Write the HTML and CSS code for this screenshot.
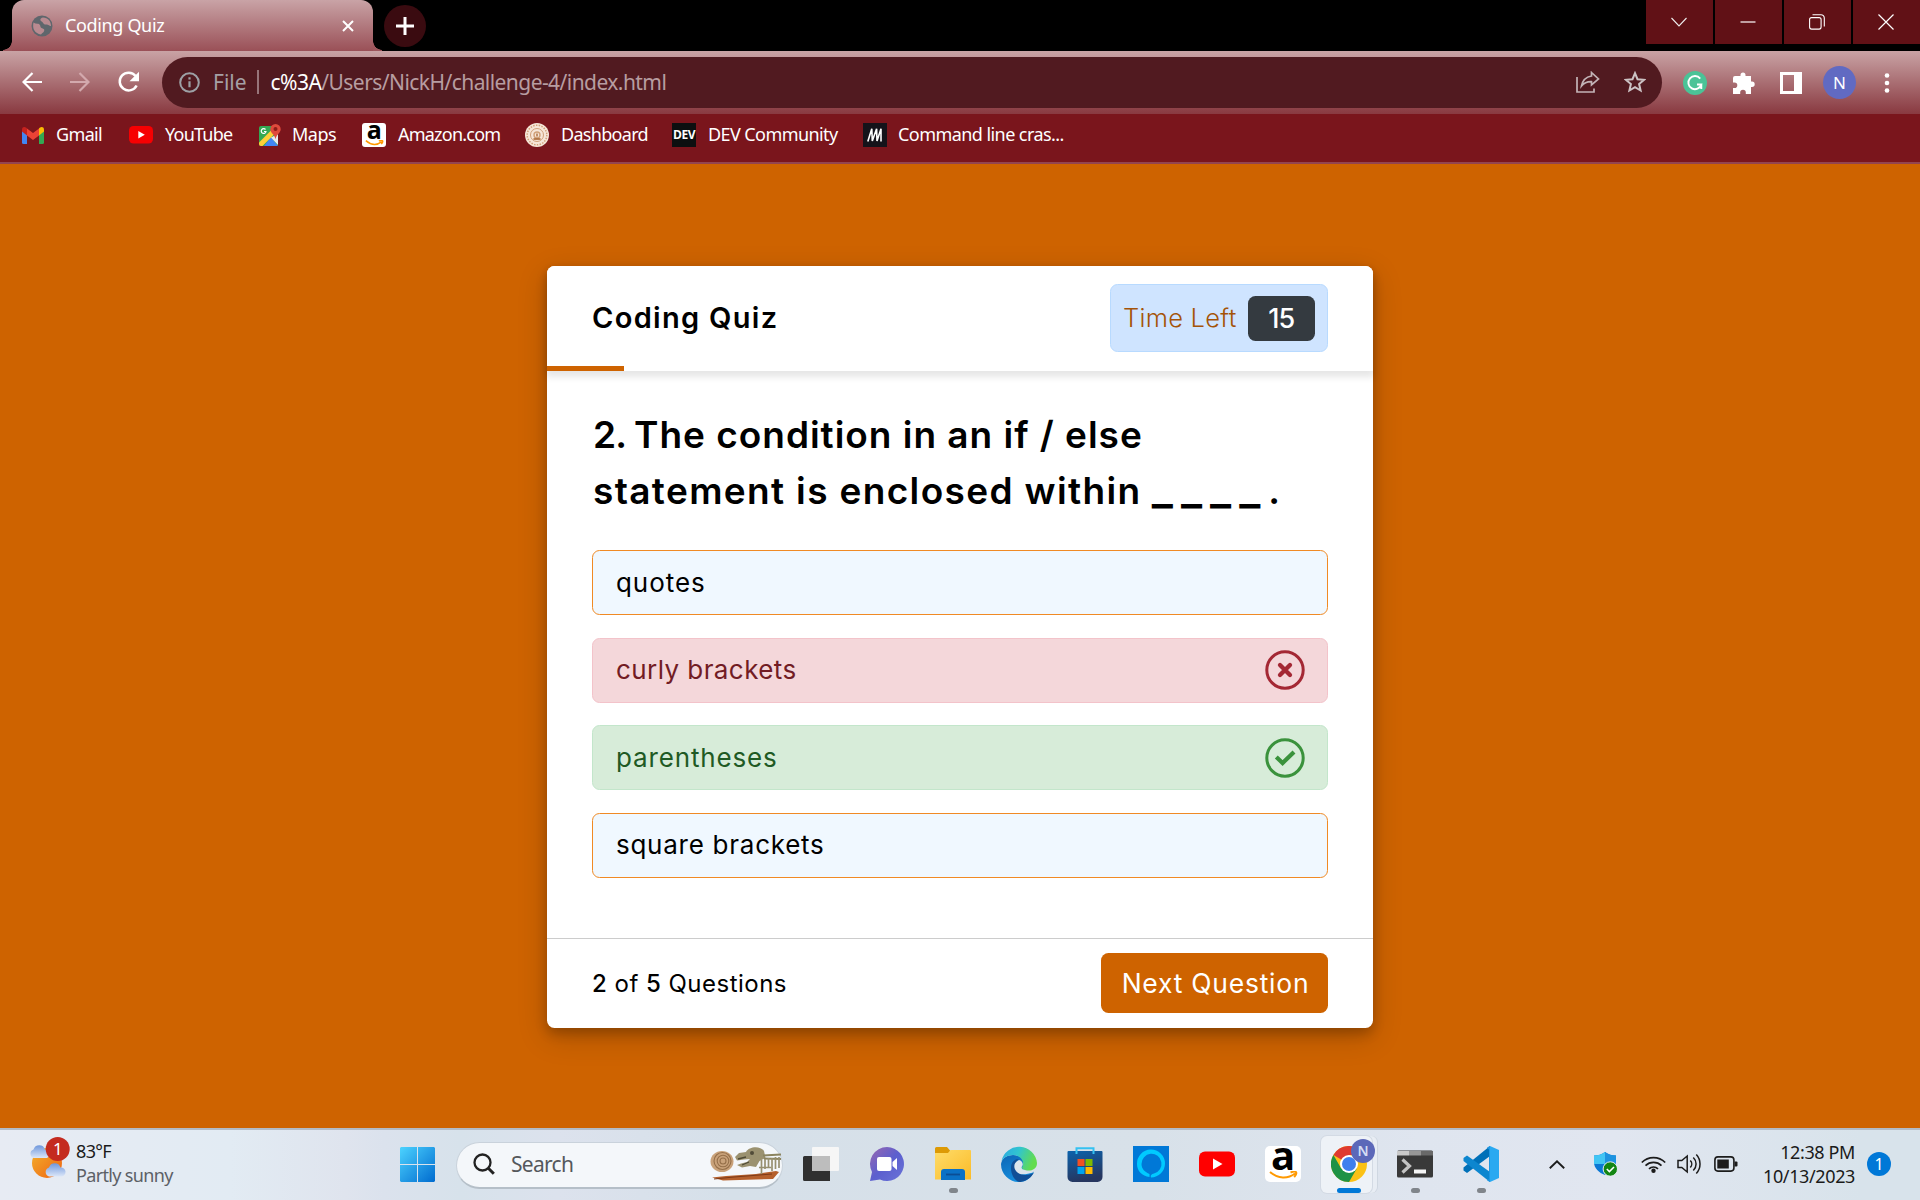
FILE: index.html
```html
<!DOCTYPE html>
<html lang="en">
<head>
<meta charset="utf-8">
<title>Coding Quiz</title>
<link rel="stylesheet" href="styles.css">
</head>
<body>
<header class="browser">
  <div class="tabstrip">
    <div class="tab">
      <svg class="globe" width="22" height="22" viewBox="0 0 22 22"><circle cx="11" cy="11" r="10.500" fill="#5f666c"/><path d="M2.500 7.500c2.500 2 4.500.5 6 2s.3 2.800 2 3.500 3.200.8 2.700 2.800S11 18 10 19.500C4 18.500 1 14 2.500 7.500zM12 2.500c-3 .5-3.300 3-1.300 4s1.300 3 4.300 3 3 1.500 5 1.500C20 6 17 3 12 2.500z" fill="#b98a90"/></svg>
      <span class="tab-title">Coding Quiz</span>
      <svg class="tab-close" width="12" height="12" viewBox="0 0 12 12"><path d="M1 1l10 10M11 1L1 11" stroke="#fff" stroke-width="2"/></svg>
    </div>
    <div class="newtab"><svg width="18" height="18" viewBox="0 0 18 18"><path d="M9 0v18M0 9h18" stroke="#fff" stroke-width="3"/></svg></div>
    <div class="window-controls">
      <div class="wc"><svg width="16" height="16" viewBox="0 0 16 16"><path d="M.5 4L8 12l7.500-8" fill="none" stroke="#eee" stroke-width="1.100"/></svg></div>
      <div class="wc"><svg width="16" height="16" viewBox="0 0 16 16"><path d="M.5 8h15" stroke="#fff" stroke-width="1.200"/></svg></div>
      <div class="wc"><svg width="16" height="16" viewBox="0 0 16 16"><g fill="none" stroke="#fff" stroke-width="1.100"><rect x=".6" y="3.600" width="11.500" height="11.500" rx="2"/><path d="M3.500 .7H12a3.300 3.300 0 0 1 3.300 3.300v8.500"/></g></svg></div>
      <div class="wc"><svg width="16" height="16" viewBox="0 0 16 16"><path d="M.5 .5l15 15M15.500 .5l-15 15" stroke="#fff" stroke-width="1.200"/></svg></div>
    </div>
  </div>

  <div class="toolbar">
    <div class="nav">
      <svg width="20" height="20" viewBox="0 0 20 20"><path d="M20 10H2M10.500 1L1.500 10l9 9" fill="none" stroke="#fff" stroke-width="2.200"/></svg>
      <svg width="20" height="20" viewBox="0 0 20 20"><path d="M0 10h18M9.500 1l9 9-9 9" fill="none" stroke="#d3a9ad" stroke-width="2.200"/></svg>
      <svg width="22" height="22" viewBox="0 0 22 22"><path d="M18.600 14.500A8.900 8.900 0 1 1 17.600 5" fill="none" stroke="#fff" stroke-width="2.500"/><path d="M21 .8v9.400h-9.500z" fill="#fff"/></svg>
    </div>
    <div class="omnibox">
      <svg class="info" width="21" height="21" viewBox="0 0 21 21"><circle cx="10.500" cy="10.500" r="9.300" fill="none" stroke="#9da0a5" stroke-width="2"/><path d="M10.500 9.300v6M10.500 5.300v2.200" stroke="#9da0a5" stroke-width="2.200"/></svg>
      <span class="scheme">File</span>
      <span class="divider"></span>
      <span class="url"><b>c%3A</b>/Users/NickH/challenge-4/index.html</span>
      <svg class="share" width="24" height="22" viewBox="0 0 24 22"><g fill="none" stroke="#c3b4b7" stroke-width="1.700"><path d="M1 6v15h17v-3.500"/><path d="M15.500 1.500L22.500 8l-7 6v-3.300C11 10.500 8 12 5.500 15 6.500 9.500 9.500 6 15.500 5z"/></g></svg>
      <svg class="star" width="22" height="22" viewBox="0 0 22 22"><path d="M11 2.200l2.500 6 6.600.6-5 4.300 1.500 6.400L11 16.100l-5.600 3.400 1.500-6.400-5-4.300 6.600-.6z" fill="none" stroke="#ccc2c4" stroke-width="2"/></svg>
    </div>
    <div class="extensions">
      <svg width="24" height="24" viewBox="0 0 24 24"><circle cx="12" cy="12" r="12" fill="#4bc397"/><path d="M17.200 7.600A6.600 6.600 0 1 0 18.300 13.500h-4.300M18.300 13v5" fill="none" stroke="#fff" stroke-width="1.900"/></svg>
      <svg width="22" height="22" viewBox="0 0 22 22"><path d="M2 4h5.500V3a2.500 2.500 0 0 1 5 0v1H18v5.500h1a2.700 2.700 0 0 1 0 5.400h-1V22h-5.200v-1.500a2.800 2.800 0 0 0-5.600 0V22H0v-6h1.500a2.800 2.800 0 0 0 0-5.600H0V6a2 2 0 0 1 2-2z" fill="#fff"/></svg>
      <svg width="22" height="22" viewBox="0 0 22 22"><path fill="#fff" fill-rule="evenodd" d="M0 0h22v22H0zM3 3v16h11V3z"/></svg>
      <span class="profile">N</span>
      <svg width="6" height="20" viewBox="0 0 6 20"><g fill="#fff"><circle cx="3" cy="2.500" r="2.300"/><circle cx="3" cy="10" r="2.300"/><circle cx="3" cy="17.500" r="2.300"/></g></svg>
    </div>
  </div>

  <nav class="bookmarks">
    <a class="bm bm-gmail"><svg width="22" height="17" viewBox="0 0 22 17"><path d="M0 3v12.500A1.500 1.500 0 0 0 1.500 17H5V7z" fill="#4285f4"/><path d="M22 3v12.500a1.500 1.500 0 0 1-1.500 1.500H17V7z" fill="#34a853"/><path d="M5 1.500l6 4.500 6-4.500V8.500L11 13 5 8.500z" fill="#ea4335"/><path d="M0 2.500C0 0 2.500-.6 4.300.8L5 1.400v7L0 4.500z" fill="#c5221f"/><path d="M22 2.500c0-2.500-2.500-3.100-4.300-1.700l-.7.6v7l5-3.900z" fill="#fbbc04"/></svg><span>Gmail</span></a>
    <a class="bm bm-youtube"><svg width="24" height="18" viewBox="0 0 24 18"><rect width="24" height="17.500" rx="4.500" fill="#f60002"/><path d="M9.300 5l6.500 3.700-6.500 3.700z" fill="#fff"/></svg><span>YouTube</span></a>
    <a class="bm bm-maps"><svg width="22" height="22" viewBox="0 0 22 22"><rect y="2" width="19" height="20" rx="2" fill="#34a853"/><path d="M12 13l7 9H5z" fill="#4285f4"/><path d="M0 18.500L14.500 4l3 4L3.500 22H2a2 2 0 0 1-2-2z" fill="#fdd037"/><path d="M19 10v11l-7-7.500z" fill="#e8eaed"/><path d="M16.500 0a5.200 5.200 0 0 1 5.200 5.200c0 3.500-4.200 5-5.200 10-1-5-5.200-6.500-5.200-10A5.200 5.200 0 0 1 16.500 0z" fill="#e04a3c"/><circle cx="16.500" cy="5" r="2" fill="#8e1d17"/><path d="M6.500 5.500A2.400 2.400 0 1 0 7 7.500H5" fill="none" stroke="#fff" stroke-width="1.200"/></svg><span>Maps</span></a>
    <a class="bm bm-amazon"><span class="amazon"><i>a</i><svg width="19" height="6" viewBox="0 0 28 9"><path d="M1 1c8 7 17 7 24 1.500M20.500 1.500c3-1.200 5-1 5.500-.3s0 3-1.800 5" fill="none" stroke="#f90" stroke-width="2.200"/></svg></span><span>Amazon.com</span></a>
    <a class="bm bm-dash"><svg width="24" height="24" viewBox="0 0 24 24"><circle cx="12" cy="12" r="12" fill="#f6e6d8"/><g fill="none" stroke="#d0a078"><circle cx="12" cy="12" r="9.800" stroke-width="1.500" stroke-dasharray="1.500 1.300"/><circle cx="12" cy="12" r="6.500" stroke-width="1"/><circle cx="12" cy="12" r="3" stroke-width="1.400"/></g><path d="M12 10.500v3M8.500 16h7" stroke="#a5622c" stroke-width="1.300"/></svg><span>Dashboard</span></a>
    <a class="bm bm-dev"><span class="dev">DEV</span><span>DEV Community</span></a>
    <a class="bm bm-cmd"><svg width="24" height="24" viewBox="0 0 24 24"><path d="M0 0h24v24H0z" fill="#15131a"/><path d="M4.800 18.500L8.800 5.800 9.300 18 13.600 5.800l.4 12.200L18 5.800V18.500" fill="none" stroke="#fff" stroke-width="1.600"/></svg><span>Command line cras...</span></a>
  </nav>
</header>

<main class="page">
  <section class="quiz">
    <header class="quiz-header">
      <h1 class="quiz-title">Coding Quiz</h1>
      <div class="timer"><span class="timer-label">Time Left</span><span class="timer-sec">15</span></div>
      <div class="time-line"></div>
    </header>
    <div class="quiz-body">
      <h2 class="question"><span class="q1"><span class="num">2. </span>The condition in an if / else</span><br><span class="q2">statement is enclosed within</span> <span class="blank">____</span>.</h2>
      <div class="options">
        <div class="option"><span class="o1">quotes</span></div>
        <div class="option wrong"><span class="o2">curly brackets</span><svg width="40" height="40" viewBox="0 0 40 40"><circle cx="20" cy="20" r="18.200" fill="none" stroke="#a42834" stroke-width="3"/><path d="M15 15l10 10M25 15L15 25" stroke="#a42834" stroke-width="4.300" stroke-linecap="round"/></svg></div>
        <div class="option right"><span class="o3">parentheses</span><svg width="40" height="40" viewBox="0 0 40 40"><circle cx="20" cy="20" r="18.200" fill="none" stroke="#3a923c" stroke-width="3"/><path d="M11.300 19l6.300 6L29 14" fill="none" stroke="#3a923c" stroke-width="4.200"/></svg></div>
        <div class="option"><span class="o4">square brackets</span></div>
      </div>
    </div>
    <footer class="quiz-footer">
      <span class="count"><b>2</b> of <b>5</b> Questions</span>
      <button class="next">Next Question</button>
    </footer>
  </section>
</main>

<footer class="taskbar">
  <div class="weather">
    <svg width="41" height="43" viewBox="0 0 41 43"><defs><linearGradient id="sun" x2="1" y2="1"><stop stop-color="#f3b12d"/><stop offset="1" stop-color="#ee6312"/></linearGradient><linearGradient id="cl" x2="0" y2="1"><stop stop-color="#6f97dc"/><stop offset="1" stop-color="#dbe6f8"/></linearGradient></defs><circle cx="18" cy="26" r="15" fill="url(#sun)"/><path d="M4.500 21a4.500 4.500 0 0 1 0-8.500 6 6 0 0 1 11.500 0A4.500 4.500 0 0 1 18 21z" fill="url(#cl)"/><path d="M20 39.500a4.700 4.700 0 0 1 0-9 6 6 0 0 1 11.500 0 4.500 4.500 0 0 1 1 9z" fill="url(#cl)"/><circle cx="28.700" cy="12" r="12" fill="#c42b1f"/><text x="28.900" y="18" text-anchor="middle" class="badge-num">1</text></svg>
    <div class="weather-text"><span class="temp">83°F</span><span class="cond">Partly sunny</span></div>
  </div>

  <div class="apps">
    <div class="app start"><svg width="35" height="35" viewBox="0 0 35 35"><defs><linearGradient id="win" x2="1" y2="1"><stop stop-color="#4cd3ff"/><stop offset="1" stop-color="#006bcf"/></linearGradient></defs><path fill="url(#win)" d="M1 0h16v17H0V1zM18 0h16l1 1v16H18zM0 18h17v17H1l-1-1zM18 18h17v16l-1 1H18z"/></svg></div>
    <div class="search">
      <svg width="22" height="22" viewBox="0 0 22 22"><circle cx="9.500" cy="9.500" r="8" fill="none" stroke="#222" stroke-width="2.300"/><path d="M15.300 15.300l5.500 5.500" stroke="#222" stroke-width="3"/></svg>
      <span class="search-text">Search</span>
      <svg class="fossils" width="72" height="36" viewBox="0 0 72 36"><path d="M2 31.500l14-1.500 30-2 20-3 3 1-6 7-50 1.500z" fill="#b5602c"/><path d="M4 33l20-2 38-3" stroke="#7d3a18" fill="none"/><ellipse cx="12" cy="15.500" rx="11.500" ry="10.500" fill="#c9a27a"/><g fill="none" stroke="#96704a" stroke-width="1.100"><circle cx="12.500" cy="15" r="8.500"/><circle cx="13" cy="15" r="5.800"/><circle cx="13" cy="15" r="3"/></g><path d="M25 11l4-4 7-1c3-5.500 14-6.500 18-1l1.500 7-6 3-3.500 6-6-1-8 1.500-5-2.500 4-1.500 6-1.500 3-3-6 .5-7 1z" fill="#9b9270"/><path d="M28 13l8-2M32 19l7-3" stroke="#4e4a35" stroke-width="1.300"/><circle cx="42" cy="7" r="2" fill="#514c38"/><path d="M53 9.500l18-1M54 12.500l17 .5" stroke="#8b845f" stroke-width="2.200"/><path d="M51.500 14v14M55 13v10M58.500 12v10M62 12v13M65.500 11v12M69 11v11M49 21.500h12" stroke="#979070" stroke-width="1.700" fill="none"/></svg>
    </div>
    <div class="app"><svg width="36" height="34" viewBox="0 0 36 34"><path d="M0 10.500a1.500 1.500 0 0 1 1.500-1.500H27v25H1.500A1.500 1.500 0 0 1 0 32.500z" fill="#303030"/><rect x="9" width="27" height="24" rx="1" fill="#f6f6f6"/><path d="M9 9h18v15H9z" fill="#bdbdbd"/></svg></div>
    <div class="app"><svg width="36" height="36" viewBox="0 0 36 36"><defs><linearGradient id="chat" x2="1" y2="1"><stop stop-color="#9a68b0"/><stop offset=".5" stop-color="#5c5fce"/><stop offset="1" stop-color="#6a74d8"/></linearGradient></defs><path d="M18 1a17 17 0 1 1-7 32.500L1 35l2-9A17 17 0 0 1 18 1z" fill="url(#chat)"/><rect x="8" y="11" width="14.500" height="14" rx="2" fill="#fff"/><path d="M23.500 16l4.500-4v12l-4.500-4z" fill="#fff"/></svg></div>
    <div class="app running"><svg width="36" height="34" viewBox="0 0 36 34"><defs><linearGradient id="fold" x2="1" y2="1"><stop stop-color="#fedc69"/><stop offset="1" stop-color="#fbbb28"/></linearGradient></defs><path d="M0 1.500A1.500 1.500 0 0 1 1.500 0H12l3 3.500V9H0z" fill="#dd9a05"/><path d="M0 6h13l2.500-3H35a1 1 0 0 1 1 1v28.500H0z" fill="url(#fold)"/><path d="M6 33V25a3 3 0 0 1 3-3h18a3 3 0 0 1 3 3v8z" fill="#0a71c6"/><path d="M11 27.500h14" stroke="#0b4d94" stroke-width="1.800"/></svg></div>
    <div class="app"><svg width="36" height="36" viewBox="0 0 36 36"><defs><linearGradient id="eg" x2="1" y2=".3"><stop stop-color="#2aa7e4"/><stop offset=".5" stop-color="#31c5cf"/><stop offset="1" stop-color="#62dc4e"/></linearGradient><linearGradient id="eb" x2=".5" y2="1"><stop stop-color="#0c65b5"/><stop offset="1" stop-color="#1690df"/></linearGradient></defs><path d="M0 18C1 12 6 9 12 9c8 0 12 5 10 11-1 6 6 9 11 5.500C30 33 24 36 18 36A18 18 0 0 1 0 18z" fill="url(#eb)"/><path d="M.5 15A18 18 0 0 1 36 17c0 6-5 8-10 7.500-4-.4-6-2-4.500-4C24 15 19 9 12 9 7 9 3 11 .5 15z" fill="url(#eg)"/><path d="M10 22c0-6 4-9 8-9-4 3-5 8-2 12 4 5 12 5 17 1.500C29 34 22 36 18 36c-5-2-8-8-8-14z" fill="#114f96"/><path d="M18 14c-5 2-6 7-3 11 1 1.300 2.400 2.300 4 3 2 .5 8 .5 14-2-3 .8-9-.5-11-2.500-2-1.500-1.500-2.500-.5-4 1-2.500-1-5-3.500-5.500z" fill="#dce5ec"/></svg></div>
    <div class="app"><svg width="36" height="36" viewBox="0 0 36 36"><defs><linearGradient id="st" x2=".3" y2="1"><stop stop-color="#0c63ad"/><stop offset="1" stop-color="#26365f"/></linearGradient></defs><path d="M.5 6a1 1 0 0 1 1-1h33a1 1 0 0 1 1 1v25a5 5 0 0 1-5 5h-25a5 5 0 0 1-5-5z" fill="url(#st)"/><path d="M9.500 8V2.200h17V8" fill="none" stroke="#35c1f1" stroke-width="2"/><path d="M10.500 13h7v7h-7z" fill="#f25022"/><path d="M18.500 13h7v7h-7z" fill="#7fba00"/><path d="M10.500 21h7v7h-7z" fill="#00a4ef"/><path d="M18.500 21h7v7h-7z" fill="#ffb900"/></svg></div>
    <div class="app"><svg width="36" height="36" viewBox="0 0 36 36"><path d="M0 0h36v36H0z" fill="#0078d7"/><path d="M16.500 31C9 30 4 25 4 18a14 14 0 1 1 14 13.500c-1-2 .5-3.500 3-4A10 10 0 1 0 8.500 18c0 5 3.500 8 8 10z" fill="#00caff"/></svg></div>
    <div class="app"><svg width="36" height="26" viewBox="0 0 36 26"><rect width="36" height="25" y=".5" rx="6" fill="#f00"/><path d="M14 7.500l9.500 5.500-9.500 5.500z" fill="#fff"/></svg></div>
    <div class="app"><span class="amazon big"><i>a</i><svg width="29" height="9" viewBox="0 0 29 9"><path d="M1 1c8 7 18 7 25 1.500M21.500 1.500c3-1.200 5-1 5.500-.3s0 3-1.800 5" fill="none" stroke="#f90" stroke-width="2"/></svg></span></div>
    <div class="app active"><svg width="36" height="36" viewBox="0 0 36 36"><circle cx="18" cy="18" r="18" fill="#fbc116"/><path d="M18 18L2.400 9A18 18 0 0 1 33.600 9z" fill="#df3a30"/><path d="M2.400 9A18 18 0 0 0 18 36l7.800-13.500H18L10.200 22.500z" fill="#1e9245"/><path d="M18 9h15.600L26 23z" fill="#fbc116"/><circle cx="18" cy="18" r="9" fill="#fff"/><circle cx="18" cy="18" r="7" fill="#3f7fee"/></svg><span class="app-badge">N</span></div>
    <div class="app running"><svg width="36" height="28" viewBox="0 0 36 28"><path d="M0 2a1.500 1.500 0 0 1 1.500-1.500h33A1.500 1.500 0 0 1 36 2v24a1.500 1.500 0 0 1-1.500 1.500h-33A1.500 1.500 0 0 1 0 26z" fill="#393939"/><path d="M0 5.500V1h12v4.500z" fill="#c9c9c9"/><path d="M12 1h12v4.500H12z" fill="#979797"/><path d="M24 1h12v4.500H24z" fill="#696969"/><path d="M5.500 9.500l7 6.500-7 6.500" fill="none" stroke="#c4c4c4" stroke-width="3.200"/><path d="M17 19.500h12v4H17z" fill="#f4f4f4"/></svg></div>
    <div class="app running"><svg width="36" height="36" viewBox="0 0 36 36"><path d="M27 0l9 4v28l-9 4z" fill="#2aa9f1"/><path d="M27 0v10L4 27l-3.500-2.500v-3z" fill="#0070b8"/><path d="M27 36V26L4 9.500.5 12v3z" fill="#0d86cf"/><path d="M24 1.500L27 0v36l-3-1.500 2-1.500V3.500z" fill="#1e97e2"/></svg></div>
  </div>

  <div class="tray">
    <svg class="t-up" width="16" height="9" viewBox="0 0 16 9"><path d="M.8 8.200L8 1.300l7.200 6.900" fill="none" stroke="#1c1c1c" stroke-width="1.900"/></svg>
    <svg class="t-shield" width="24" height="24" viewBox="0 0 24 24"><path d="M11 0c3 2.500 7 3.500 11 3.500v7C22 16 17 21 11 23 5 21 0 16 0 10.500v-7C4 3.500 8 2.500 11 0z" fill="#0b78d4"/><path d="M11 0v12H0V3.500C4 3.500 8 2.500 11 0z" fill="#41c5f4"/><path d="M11 0c3 2.500 7 3.500 11 3.500V12H11z" fill="#1d93e0"/><circle cx="16.300" cy="17" r="7.200" fill="#138613" stroke="#e6ecf2"/><path d="M12.800 17l2.600 2.600 4.600-4.700" fill="none" stroke="#fff" stroke-width="1.500"/></svg>
    <svg class="t-wifi" width="25" height="18" viewBox="0 0 25 18"><g fill="none" stroke="#1c1c1c" stroke-width="1.700"><path d="M.8 7.500a16.500 16.500 0 0 1 23.400 0M4.500 10.700a11.500 11.500 0 0 1 16 0M8 13.800a6.500 6.500 0 0 1 9 0"/></g><circle cx="12.500" cy="15.700" r="2.200" fill="#1c1c1c"/></svg>
    <svg class="t-sound" width="25" height="22" viewBox="0 0 25 22"><g fill="none" stroke="#1c1c1c" stroke-width="1.500"><path d="M1 7.500h3.800L10.200 3v16l-5.400-4.500H1z"/><path d="M13.300 7.500a5 5 0 0 1 0 7M16.300 4.500a9 9 0 0 1 0 13M19.300 1.500a14 14 0 0 1 0 19"/></g></svg>
    <svg class="t-batt" width="24" height="16" viewBox="0 0 24 16"><rect x=".9" y=".9" width="19" height="14.200" rx="3" fill="none" stroke="#1c1c1c" stroke-width="1.600"/><rect x="3.300" y="3.500" width="11.500" height="9" fill="#1c1c1c"/><path d="M20.500 5.500h2a1 1 0 0 1 1 1v3a1 1 0 0 1-1 1h-2z" fill="#1c1c1c"/></svg>
    <div class="clock"><span>12:38 PM</span><span>10/13/2023</span></div>
    <span class="notif">1</span>
  </div>
</footer>
</body>
</html>
```
FILE: styles.css
```css
* { box-sizing: border-box; }

body {
  margin: 0;
  width: 1920px;
  height: 1200px;
  overflow: hidden;
  display: flex;
  flex-direction: column;
  font-family: "Noto Sans", "Open Sans", sans-serif;
  font-size: 18px;
}

svg { display: block; flex: none; }
span { white-space: nowrap; }

/* Browser window */
.browser { flex: none; height: 164px; background: #000; }

.tabstrip { display: flex; height: 51px; padding-left: 12px; }
.tab {
  position: relative;
  display: flex;
  align-items: center;
  width: 361px;
  padding: 0 19px;
  border-radius: 12px 12px 0 0;
  background: linear-gradient(#c9a3a6, #9a5057);
  color: #fff;
}
.tab::before, .tab::after {
  content: "";
  position: absolute;
  bottom: 0;
  width: 9px;
  height: 10px;
}
.tab::before { left: -9px; background: radial-gradient(circle at 0 0, transparent 8.500px, #9d565c 9px); }
.tab::after { right: -9px; background: radial-gradient(circle at 100% 0, transparent 8.500px, #9d565c 9px); }
.tab-title { margin-left: 12px; padding-bottom: 2px; letter-spacing: -.35px; }
.tab-close { margin-left: auto; }
.newtab {
  display: flex;
  align-items: center;
  justify-content: center;
  width: 42px;
  height: 42px;
  margin: 5px 0 0 11px;
  border-radius: 50%;
  background: #3a0b10;
}
.window-controls { display: flex; gap: 2px; margin-left: auto; height: 44px; }
.wc { display: flex; align-items: center; justify-content: center; width: 67px; padding-right: 1px; background: #611116; }

.toolbar {
  display: flex;
  height: 63px;
  padding-top: 6px;
  background: linear-gradient(#c9a3a5, #893940);
}
.nav { display: flex; align-items: center; gap: 28px; width: 162px; height: 51px; padding: 0 0 1px 22px; }
.omnibox {
  display: flex;
  align-items: center;
  width: 1500px;
  height: 51px;
  padding: 0 16px 1px 17px;
  border-radius: 26px;
  background: #511a20;
  font-size: 21px;
  color: #b79da1;
}
.scheme { margin-left: 13px; color: #a5a0a5; }
.divider { width: 2px; height: 24px; margin: 0 12px 0 10px; background: #97757a; }
.url { letter-spacing: -.56px; }
.url b { font-weight: 400; color: #fff; }
.share { margin-left: auto; }
.star { margin-left: 24px; }
.extensions { display: flex; align-items: center; height: 51px; padding-left: 21px; }
.extensions svg:nth-child(2) { margin-left: 26px; }
.extensions svg:nth-child(3) { margin-left: 25px; }
.extensions svg:nth-child(5) { margin-left: 28px; }
.profile {
  width: 33px;
  height: 33px;
  margin-left: 21px;
  border-radius: 50%;
  background: #616ac2;
  color: #fff;
  font-size: 17px;
  line-height: 33px;
  text-align: center;
}

.bookmarks {
  display: flex;
  align-items: center;
  height: 50px;
  padding: 0 0 6px 22px;
  border-bottom: 2px solid #924450;
  background: #7a151c;
  color: #fff;
}
.bm { display: flex; align-items: center; height: 24px; }
.bm > span:last-child { margin-left: 12px; padding-bottom: 2px; }
.bm-gmail { width: 107px; letter-spacing: -.65px; }
.bm-youtube { width: 130px; letter-spacing: -.77px; }
.bm-maps { width: 103px; letter-spacing: -.5px; }
.bm-amazon { width: 163px; letter-spacing: -.78px; }
.bm-dash { width: 147px; letter-spacing: -.7px; }
.bm-dev { width: 191px; letter-spacing: -.58px; }
.bm-cmd { letter-spacing: -.56px; }
.bm-maps > span:last-child, .bm-cmd > span:last-child { margin-left: 11px; }

.amazon {
  display: flex;
  flex-direction: column;
  align-items: center;
  width: 24px;
  height: 24px;
  border-radius: 3px;
  background: #fff;
  color: #000;
}
.amazon i {
  height: 17px;
  font: 700 25px/12px "Open Sans", sans-serif;
}
.amazon.big { width: 36px; height: 36px; border-radius: 5px; }
.amazon.big i { height: 25px; font-size: 40px; line-height: 17px; }
.dev {
  width: 24px;
  height: 24px;
  background: #0d0f10;
  font: 700 12px/24px "Open Sans", sans-serif;
  letter-spacing: -.5px;
  text-align: center;
}

/* Quiz page */
.page {
  flex: none;
  display: flex;
  justify-content: center;
  height: 964px;
  padding-top: 102px;
  background: #ce6300;
  font-family: Inter, sans-serif;
}
.quiz {
  display: flex;
  flex-direction: column;
  width: 826px;
  height: 762px;
  border-radius: 7.500px;
  background: #fff;
  box-shadow: 0 6px 12px rgba(0, 0, 0, .2), 0 9px 30px rgba(0, 0, 0, .19);
}
.quiz-header {
  position: relative;
  display: flex;
  align-items: center;
  justify-content: space-between;
  height: 105px;
  padding: 0 45px 1px;
  border-radius: 7.500px 7.500px 0 0;
  background: #fff;
  box-shadow: 0 4.500px 7.500px 1px rgba(0, 0, 0, .1);
}
.quiz-title { margin: 0; padding-bottom: 1px; font-size: 29px; font-weight: 600; letter-spacing: 1.300px; }
.timer {
  display: flex;
  align-items: center;
  justify-content: space-between;
  width: 218px;
  height: 68px;
  padding: 0 12px;
  border: 1px solid #b8daff;
  border-radius: 7.500px;
  background: #cfe4ff;
}
.timer-label { padding-bottom: 1px; color: #a45308; font-size: 25.500px; font-weight: 300; letter-spacing: .25px; }
.timer-sec {
  width: 67.500px;
  height: 45px;
  border-radius: 7.500px;
  background: #343a40;
  color: #fff;
  font-size: 27px;
  font-weight: 500;
  line-height: 46px;
  letter-spacing: -1px;
  text-align: center;
}
.time-line { position: absolute; left: 0; bottom: 0; width: 77px; height: 5px; background: #ce6300; }

.quiz-body { flex: 1; padding: 36px 45px 0; }
.question { margin: 0; padding-left: 1px; font-size: 37px; font-weight: 600; line-height: 56px; }
.q1 { letter-spacing: .980px; }
.num { letter-spacing: -.8px; }
.q2 { letter-spacing: 1.350px; }
.blank { margin-left: 1px; font-size: 45px; line-height: 40px; letter-spacing: 8px; }
.options { display: flex; flex-direction: column; gap: 22.600px; margin-top: 31px; }
.option {
  display: flex;
  align-items: center;
  justify-content: space-between;
  height: 65px;
  padding: 0 22px 0 23px;
  border: 1px solid #f08a24;
  border-radius: 7.500px;
  background: #f0f8ff;
  color: #000;
  font-size: 26px;
}
.option span { padding-bottom: 1px; }
.wrong { border-color: #f3c3ca; background: #f4d7da; color: #721c24; }
.right { border-color: #c3e6cb; background: #d7ecd9; color: #1f5a24; }
.o1 { letter-spacing: .94px; }
.o2 { letter-spacing: .42px; }
.o3 { letter-spacing: .85px; }
.o4 { letter-spacing: .74px; }

.quiz-footer {
  display: flex;
  align-items: center;
  justify-content: space-between;
  height: 90px;
  padding: 0 45px 1px;
  border-top: 1px solid #ccc;
}
.count { font-size: 24px; letter-spacing: .48px; }
.count b { font-weight: 500; }
.next {
  width: 227px;
  height: 60px;
  padding: 0 0 0 2px;
  border: 0;
  border-radius: 7.500px;
  background: #ce6300;
  color: #fff;
  font: 400 26.500px Inter, sans-serif;
  letter-spacing: .75px;
}

/* Windows taskbar */
.taskbar {
  flex: none;
  display: flex;
  height: 72px;
  border-top: 2px solid #b3bcc6;
  background: linear-gradient(90deg, #e7ebf3, #e2ebf3 12%, #dfe4ee 18%, #dbe2ed 20%, #d7e2eb 24%, #dce2ed 29%, #d6e0e9 38%, #d8e1e9 60%, #dfe5ef 74%, #e1e6f0 84%, #d8e3eb 97%);
}
.weather { display: flex; width: 384px; padding: 7px 0 0 29px; }
.badge-num { fill: #fff; font-size: 17px; }
.weather-text { display: flex; flex-direction: column; margin-left: 6px; padding-top: 2px; line-height: 24px; color: #1a1a1a; letter-spacing: -.65px; }
.cond { color: #5c6066; }

.apps { display: flex; align-items: center; height: 68px; }
.app { position: relative; display: flex; align-items: center; justify-content: center; width: 66px; height: 68px; }
.search {
  display: flex;
  align-items: center;
  width: 327px;
  height: 47px;
  margin: 2px 5px 0 6px;
  padding: 0 0 1px 16px;
  border: 1px solid #c9d2db;
  border-bottom: 2px solid #b5bfc8;
  border-radius: 24px;
  background: #f4f7fa;
}
.search-text { margin-left: 16px; font-size: 21px; letter-spacing: -.7px; color: #54585c; }
.fossils { margin-left: auto; }
.running::after, .active::after {
  content: "";
  position: absolute;
  bottom: 5px;
  width: 9px;
  height: 5px;
  border-radius: 3px;
  background: #80858b;
}
.active::after { width: 24px; background: #0078d7; }
.active::before {
  content: "";
  position: absolute;
  left: 5px;
  top: 6px;
  width: 51px;
  height: 57px;
  border-radius: 6px;
  background: #eef2f7;
  box-shadow: 0 0 0 1px #d3dae4, 5px 0 0 #e8edf4, 6px 0 0 #cfd7e1;
}
.active svg { position: relative; }
.app-badge {
  position: absolute;
  left: 35px;
  top: 9px;
  width: 24px;
  height: 24px;
  border-radius: 50%;
  background: #5c68b9;
  color: #d5dcf4;
  font-size: 14px;
  font-weight: 600;
  line-height: 24px;
  text-align: center;
}

.tray { display: flex; align-items: center; height: 68px; padding-left: 35px; }
.t-shield { margin-left: 29px; }
.t-wifi { margin-left: 23px; }
.t-sound { margin-left: 11px; }
.t-batt { margin-left: 12px; }
.clock { display: flex; flex-direction: column; width: 117px; padding-bottom: 1px; text-align: right; line-height: 24px; letter-spacing: -.38px; color: #1a1a1a; }
.notif {
  width: 24px;
  height: 24px;
  margin-left: 12px;
  border-radius: 50%;
  background: #0078d7;
  color: #fff;
  font-size: 16px;
  line-height: 24px;
  text-align: center;
}
```
